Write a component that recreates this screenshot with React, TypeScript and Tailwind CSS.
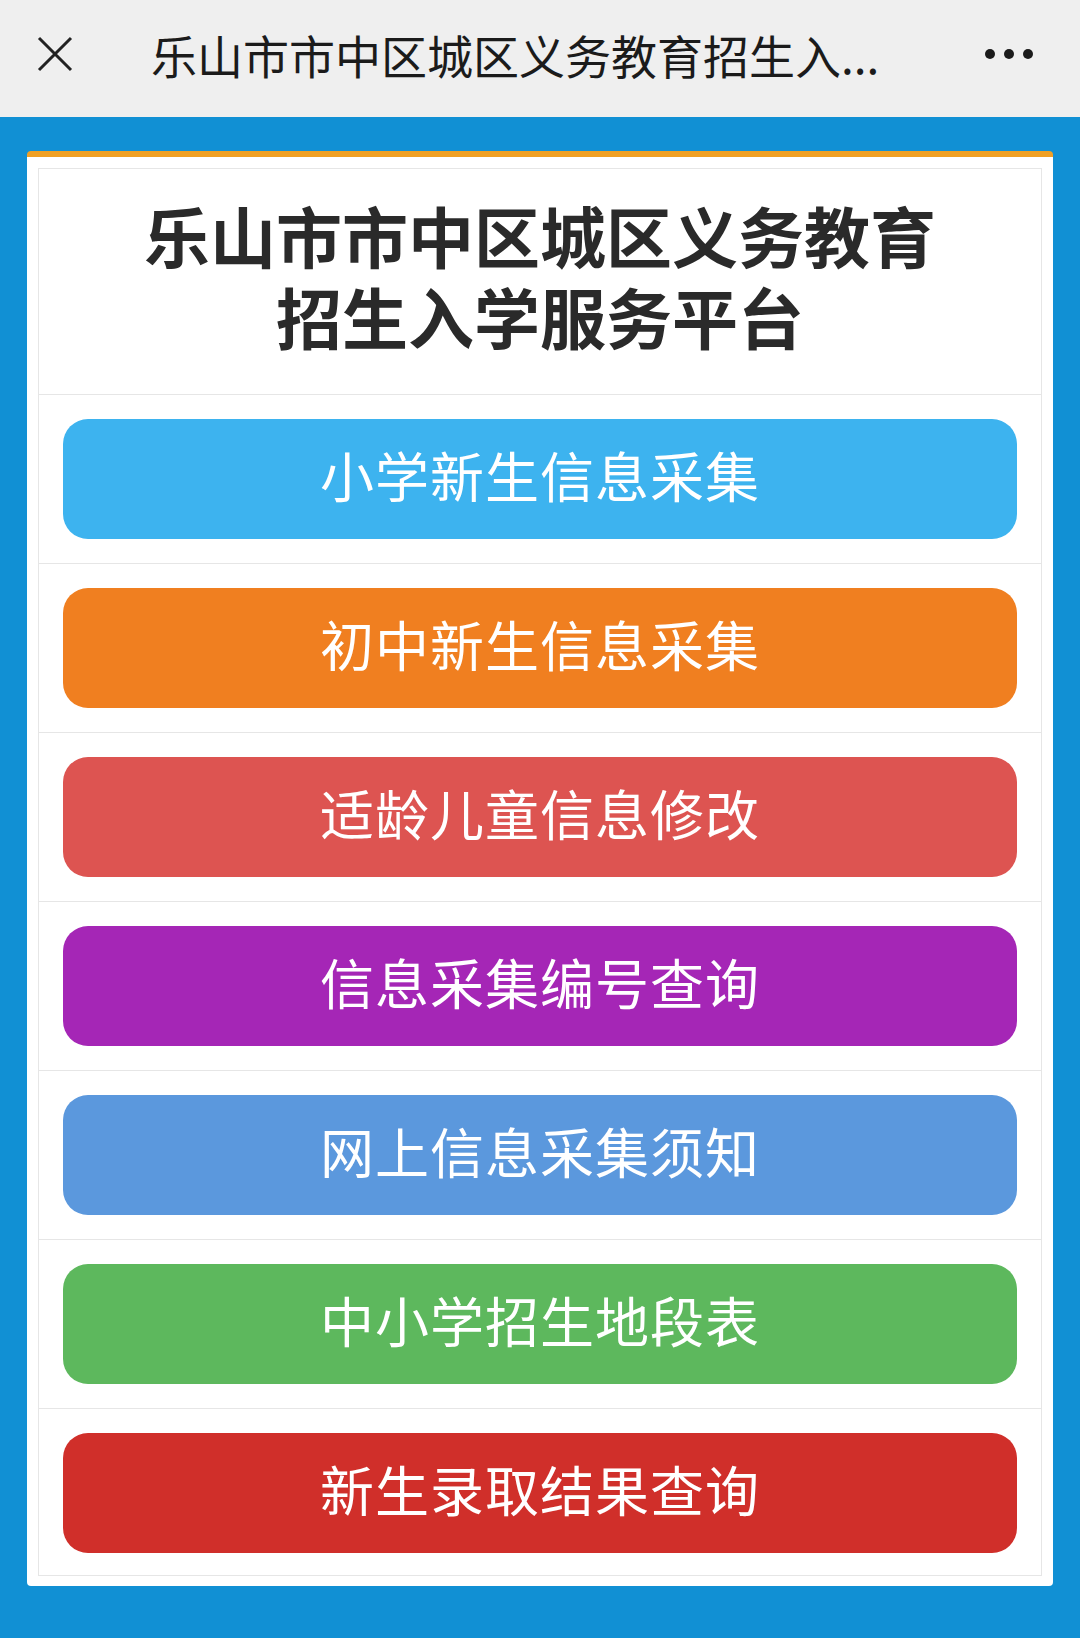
const BUTTONS: Array<{ label: string; color: string }> = [
  { label: "小学新生信息采集", color: "bg-[#3db3ef]" },
  { label: "初中新生信息采集", color: "bg-[#f07f20]" },
  { label: "适龄儿童信息修改", color: "bg-[#dd5451]" },
  { label: "信息采集编号查询", color: "bg-[#a526b6]" },
  { label: "网上信息采集须知", color: "bg-[#5b98dd]" },
  { label: "中小学招生地段表", color: "bg-[#5db85d]" },
  { label: "新生录取结果查询", color: "bg-[#d02f2a]" },
];

const FONT = "font-['Noto_Sans_CJK_SC','Noto_Sans',sans-serif]";

export default function App() {
  return (
    <div className={`min-h-[1638px] w-[1080px] bg-[#1190d4] ${FONT}`}>
      {/* top bar */}
      <header className="flex h-[117px] items-center bg-[#efefef] pb-[10px]">
        <svg
          viewBox="0 0 36 36"
          className="ml-[37px] h-[36px] w-[36px]"
          fill="none"
          stroke="#222"
          strokeWidth="3"
        >
          <path d="M2 2 L34 34 M34 2 L2 34" />
        </svg>
        <h2 className="ml-[78px] text-[46px] leading-none text-[#1b1b1b]">
          乐山市市中区城区义务教育招生入...
        </h2>
        <div className="ml-auto mr-[47px] flex gap-[9px]">
          <span className="h-[10px] w-[10px] rounded-full bg-[#1b1b1b]" />
          <span className="h-[10px] w-[10px] rounded-full bg-[#1b1b1b]" />
          <span className="h-[10px] w-[10px] rounded-full bg-[#1b1b1b]" />
        </div>
      </header>

      <main className="px-[27px] pt-[34px] pb-[52px]">
        <div className="rounded-[4px] border-t-[6px] border-[#f0a024] bg-white px-[11px] pt-[11px] pb-[10px]">
          <div className="border border-[#e6e6e6]">
            <div className="flex flex-col items-center gap-[10px] pt-[30px] pb-[43px] text-[66px] leading-[71px] font-bold text-[#2a2a2a]">
              <h1>乐山市市中区城区义务教育</h1>
              <h1>招生入学服务平台</h1>
            </div>
            {BUTTONS.map((b) => (
              <div
                key={b.label}
                className="border-t border-[#e6e6e6] px-[24px] pt-[24px] pb-[24px] last:pb-[22px]"
              >
                <button
                  className={`flex h-[120px] w-full items-center justify-center rounded-[25px] pb-[10px] text-[54px] tracking-[1px] text-white ${b.color}`}
                >
                  {b.label}
                </button>
              </div>
            ))}
          </div>
        </div>
      </main>
    </div>
  );
}
